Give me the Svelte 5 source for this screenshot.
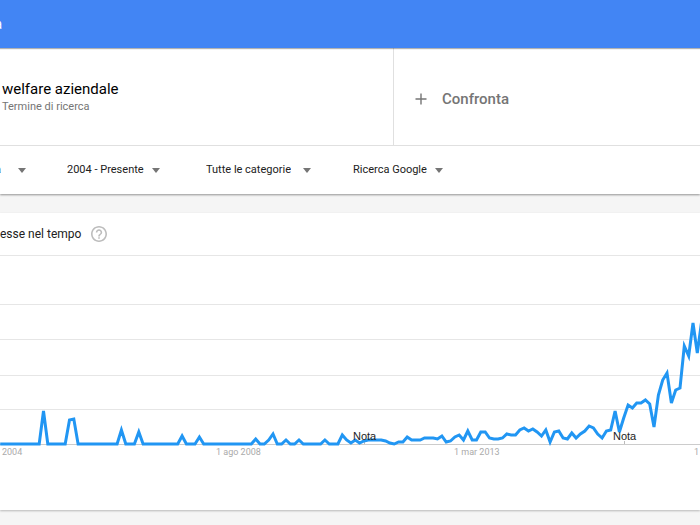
<script lang="ts">
  interface Filter {
    id: string;
    label: string;
    value: string;
  }

  const filters: Filter[] = [
    { id: "region", label: "Paese", value: "a" },
    { id: "period", label: "Periodo", value: "2004 - Presente" },
    { id: "category", label: "Categoria", value: "Tutte le categorie" },
    { id: "source", label: "Tipo di ricerca", value: "Ricerca Google" },
  ];

  const width = 700;
  const height = 190;
  const baseline = 188;
  const step = 4.33;
  const gridLines = [48, 83, 119, 153];

  // monthly interest, measured up from the baseline
  const values = [
    0, 0, 0, 0, 0, 0, 0, 0, 0, 0, 33, 0, 0, 0, 0, 0, 24, 25, 0, 0,
    0, 0, 0, 0, 0, 0, 0, 0, 14, 0, 0, 0, 12, 0, 0, 0, 0, 0, 0, 0,
    0, 0, 8, 0, 0, 0, 7, 0, 0, 0, 0, 0, 0, 0, 0, 0, 0, 0, 0, 5,
    0, 0, 4, 10, 0, 0, 4, 0, 0, 4, 0, 0, 0, 0, 0, 4, 0, 0, 0, 9,
    4, 1, 4, 1, 3, 4, 4, 4, 4, 3, 1, 0, 2, 2, 7, 4, 4, 4, 6, 6,
    6, 5, 8, 2, 3, 7, 9, 4, 13, 4, 4, 12, 12, 6, 5, 5, 6, 10, 9, 9,
    14, 16, 13, 15, 12, 8, 14, 2, 12, 13, 6, 5, 11, 6, 10, 13, 18, 16, 10, 6,
    13, 14, 33, 12, 26, 39, 36, 41, 41, 44, 40, 17, 49, 64, 71, 41, 54, 56, 98, 88,
    121, 91, 123,
  ];

  const dates = [
    { text: "2004", x: 2 },
    { text: "1 ago 2008", x: 216 },
    { text: "1 mar 2013", x: 454 },
    { text: "1", x: 694 },
  ];

  const notes = [353, 613];

  const points = values
    .map((v, i) => `${(i * step + 0.2).toFixed(1)},${baseline - v}`)
    .join(" ");

  const percent = (x: number) => `${(x / width) * 100}%`;
</script>

<div class="page">
  <header class="app-bar"><span>a</span></header>

  <section class="search">
    <div class="terms">
      <div class="term">
        <h1>welfare aziendale</h1>
        <p>Termine di ricerca</p>
      </div>
      <button type="button" class="compare">
        <svg width="12" height="12" viewBox="0 0 12 12" aria-hidden="true">
          <path d="M6 0.5v11M0.5 6h11" fill="none" stroke="#757575" stroke-width="1.4" />
        </svg>
        Confronta
      </button>
    </div>

    <div class="filters">
      {#each filters as filter (filter.id)}
        <div class="filter {filter.id}">
          <select id={filter.id} aria-label={filter.label}>
            <option>{filter.value}</option>
          </select>
          <svg width="8" height="5" viewBox="0 0 8 5" aria-hidden="true">
            <path d="M0 0h8L4 5z" fill="#757575" />
          </svg>
        </div>
      {/each}
    </div>
  </section>

  <section class="card">
    <div class="card-header">
      <h2>esse nel tempo</h2>
      <button type="button" class="help" aria-label="Guida">
        <svg width="16" height="16" viewBox="2 2 20 20" aria-hidden="true">
          <path
            fill="#bdbdbd"
            d="M11 18h2v-2h-2v2zm1-16C6.480 2 2 6.480 2 12s4.480 10 10 10 10-4.480 10-10S17.520 2 12 2zm0 18c-4.410 0-8-3.590-8-8s3.590-8 8-8 8 3.590 8 8-3.590 8-8 8zm0-14c-2.210 0-4 1.790-4 4h2c0-1.100.9-2 2-2s2 .9 2 2c0 2-3 1.750-3 5h2c0-2.250 3-2.500 3-5 0-2.210-1.790-4-4-4z"
          />
        </svg>
      </button>
    </div>

    <div class="chart">
      <svg class="plot" viewBox="0 0 {width} {height}" preserveAspectRatio="none">
        {#each gridLines as y}
          <rect x="0" {y} {width} height="1" fill="#e6e6e6" />
        {/each}
        <rect x="0" y={baseline} {width} height="1" fill="#cccccc" />
        {#each notes as x}
          <rect x={x + 11} y={baseline - 3} width="1" height="3" fill="#bbbbbb" />
        {/each}
        <polyline class="line" {points} />
      </svg>
      {#each notes as x}
        <span class="note" style="left: {percent(x)}">Nota</span>
      {/each}
      {#each dates as date}
        <span class="date" style="left: {percent(date.x)}">{date.text}</span>
      {/each}
    </div>
  </section>
</div>

<style>
  :global(body) {
    background: #f5f5f5;
  }

  .page {
    min-height: 100vh;
    overflow: hidden;
    box-sizing: border-box;
    background: #f5f5f5;
    color: #212121;
    font-family: Roboto, "Liberation Sans", sans-serif;
  }

  h1,
  h2,
  p {
    margin: 0;
    font-weight: 400;
  }

  button,
  select {
    margin: 0;
    padding: 0;
    border: 0;
    background: none;
    font-family: inherit;
    cursor: pointer;
  }

  .app-bar {
    position: relative;
    height: 48px;
    background: #4285f4;
    box-shadow: 0 1px 1px rgba(0, 0, 0, 0.3);
  }

  .app-bar span {
    display: flex;
    justify-content: flex-end;
    width: 2px;
    overflow: hidden;
    color: #fff;
    font-size: 14px;
    line-height: 48px;
  }

  .search {
    background: #fff;
    box-shadow: 0 1px 2px rgba(0, 0, 0, 0.4);
  }

  .terms {
    display: grid;
    grid-template-columns: 197fr 153fr;
    height: 97px;
    border-bottom: 1px solid #e0e0e0;
  }

  .term {
    padding: 31px 2px 0;
    border-right: 1px solid #e0e0e0;
  }

  h1 {
    color: #000;
    font-size: 15px;
    line-height: 20px;
  }

  .term p {
    color: #757575;
    font-size: 11px;
    line-height: 16px;
  }

  .compare {
    display: flex;
    align-items: center;
    gap: 15px;
    padding: 4px 21px 0;
    color: #757575;
    font-size: 15px;
    font-weight: 500;
  }

  .filters {
    display: flex;
    gap: 41px;
    height: 48px;
  }

  .filter {
    display: flex;
    align-items: center;
    gap: 8px;
  }

  .filter.region {
    justify-content: flex-end;
    gap: 17px;
    width: 26px;
    overflow: hidden;
  }

  .filter.period {
    min-width: 98px;
  }

  .filter.category {
    gap: 12px;
    min-width: 106px;
  }

  .filter svg,
  .filter select {
    flex: none;
  }

  select {
    appearance: none;
    color: #212121;
    font-size: 11px;
    line-height: 16px;
  }

  .card {
    height: 297px;
    margin-top: 19px;
    background: #fff;
    box-shadow: 0 1px 2px rgba(0, 0, 0, 0.25);
  }

  .card-header {
    display: flex;
    align-items: center;
    gap: 10px;
    height: 42px;
    border-bottom: 1px solid #e6e6e6;
  }

  h2 {
    font-size: 12px;
    line-height: 16px;
  }

  .help {
    height: 16px;
  }

  .help svg {
    display: block;
  }

  .chart {
    position: relative;
  }

  .plot {
    display: block;
    width: 100%;
    height: 190px;
  }

  .line {
    fill: none;
    stroke: #2196f3;
    stroke-width: 3;
    vector-effect: non-scaling-stroke;
  }

  .note,
  .date {
    position: absolute;
    white-space: nowrap;
  }

  .note {
    top: 173px;
    color: #222;
    font-family: "Liberation Sans", sans-serif;
    font-size: 11px;
    line-height: 14px;
  }

  .date {
    top: 190px;
    color: #aaa;
    font-size: 9px;
    line-height: 12px;
  }
</style>
